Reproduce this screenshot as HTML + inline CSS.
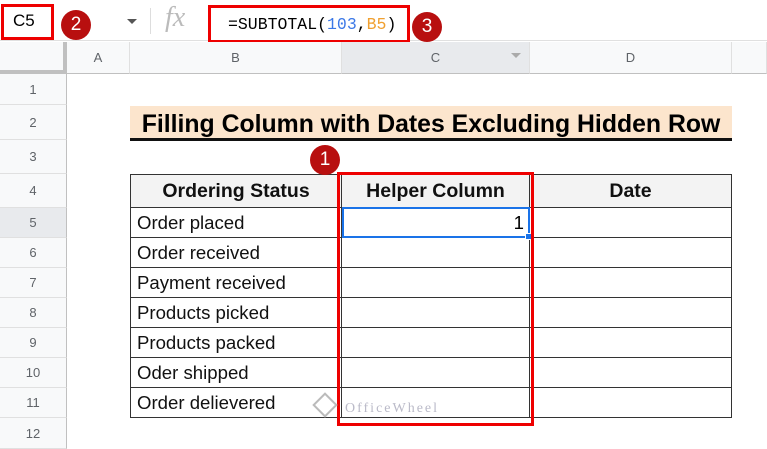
<!DOCTYPE html><html><head><style>
body{margin:0;width:767px;height:449px;overflow:hidden;background:#fff;font-family:"Liberation Sans",Arial,sans-serif;position:relative}
.a{position:absolute;box-sizing:border-box}
.rh{left:0;width:67px;background:#f8f9fa;border-bottom:1px solid #e0e0e0;border-right:1px solid #c0c0c0;color:#5f6368;font-size:13px;text-align:center}
.ch{top:42px;height:32px;background:#f8f9fa;border-right:1px solid #e0e0e0;border-bottom:1px solid #c0c0c0;color:#5f6368;font-size:13px;text-align:center;line-height:32px}
.c{border-right:1px solid #333;border-bottom:1px solid #333;font-size:18.6px;padding-left:6px;color:#111}
.circ{width:30px;height:30px;border-radius:50%;background:#b80f0f;color:#fff;font-size:19px;text-align:center;line-height:30px}
</style></head><body>
<div class="a" style="left:0;top:0;width:767px;height:41px;border-bottom:1px solid #e0e0e0"></div>
<div class="a" style="left:1px;top:4px;width:53px;height:36px;border:3px solid #e00;font-size:17px;padding:4px 0 0 9px">C5</div>
<div class="a circ" style="left:61px;top:10px">2</div>
<div class="a" style="left:127px;top:19px;border:5px solid transparent;border-top:5px solid #555"></div>
<div class="a" style="left:150px;top:8px;width:1px;height:26px;background:#ddd"></div>
<div class="a" style="left:165px;top:2px;font-family:'Liberation Serif',serif;font-style:italic;font-size:28px;color:#bbb">fx</div>
<div class="a" style="left:208px;top:5px;width:202px;height:38px;border:3px solid #e00;font-family:'Liberation Mono',monospace;font-size:16.5px;padding:7px 0 0 17px">=SUBTOTAL(<span style="color:#3b78e7">103</span>,<span style="color:#f0a030">B5</span>)</div>
<div class="a circ" style="left:412px;top:12px">3</div>
<div class="a" style="left:0;top:42px;width:67px;height:32px;background:#f8f9fa;border-right:4px solid #c0c0c0;border-bottom:4px solid #c0c0c0"></div>
<div class="a ch" style="left:67px;width:63px">A</div>
<div class="a ch" style="left:130px;width:212px">B</div>
<div class="a ch" style="left:342px;width:188px;background:#e8eaed">C<span style="position:absolute;right:8px;top:11px;border:5px solid transparent;border-top:5px solid #aaa"></span></div>
<div class="a ch" style="left:530px;width:202px">D</div>
<div class="a ch" style="left:732px;width:35px"></div>
<div class="a rh" style="top:74px;height:31px;line-height:31px">1</div>
<div class="a rh" style="top:105px;height:35px;line-height:35px">2</div>
<div class="a rh" style="top:140px;height:34px;line-height:34px">3</div>
<div class="a rh" style="top:174px;height:34px;line-height:34px">4</div>
<div class="a rh" style="top:208px;height:30px;line-height:30px;background:#e8eaed">5</div>
<div class="a rh" style="top:238px;height:30px;line-height:30px">6</div>
<div class="a rh" style="top:268px;height:30px;line-height:30px">7</div>
<div class="a rh" style="top:298px;height:30px;line-height:30px">8</div>
<div class="a rh" style="top:328px;height:30px;line-height:30px">9</div>
<div class="a rh" style="top:358px;height:30px;line-height:30px">10</div>
<div class="a rh" style="top:388px;height:30px;line-height:30px">11</div>
<div class="a rh" style="top:418px;height:31px;line-height:31px">12</div>
<div class="a" style="left:130px;top:106px;width:602px;height:35px;background:#fce5cd;font-weight:bold;font-size:24.8px;text-align:center;line-height:37px;border-bottom:3px solid #111;white-space:nowrap">Filling Column with Dates Excluding Hidden Row</div>
<div class="a" style="left:130px;top:174px;width:602px;height:244px;border-left:1px solid #333;border-top:1px solid #333"></div>
<div class="a c" style="left:131px;top:175px;width:211px;height:33px;background:#f3f3f3;font-weight:bold;text-align:center;line-height:32px;padding:0;font-size:19.5px">Ordering Status</div>
<div class="a c" style="left:342px;top:175px;width:188px;height:33px;background:#f3f3f3;font-weight:bold;text-align:center;line-height:32px;padding:0;font-size:19.5px">Helper Column</div>
<div class="a c" style="left:530px;top:175px;width:202px;height:33px;background:#f3f3f3;font-weight:bold;text-align:center;line-height:32px;padding:0;font-size:19.5px">Date</div>
<div class="a c" style="left:131px;top:208px;width:211px;height:30px;line-height:30px">Order placed</div>
<div class="a c" style="left:131px;top:238px;width:211px;height:30px;line-height:30px">Order received</div>
<div class="a c" style="left:131px;top:268px;width:211px;height:30px;line-height:30px">Payment received</div>
<div class="a c" style="left:131px;top:298px;width:211px;height:30px;line-height:30px">Products picked</div>
<div class="a c" style="left:131px;top:328px;width:211px;height:30px;line-height:30px">Products packed</div>
<div class="a c" style="left:131px;top:358px;width:211px;height:30px;line-height:30px">Oder shipped</div>
<div class="a c" style="left:131px;top:388px;width:211px;height:30px;line-height:30px">Order delievered</div>
<div class="a c" style="left:342px;top:208px;width:188px;height:30px"></div>
<div class="a c" style="left:342px;top:238px;width:188px;height:30px"></div>
<div class="a c" style="left:342px;top:268px;width:188px;height:30px"></div>
<div class="a c" style="left:342px;top:298px;width:188px;height:30px"></div>
<div class="a c" style="left:342px;top:328px;width:188px;height:30px"></div>
<div class="a c" style="left:342px;top:358px;width:188px;height:30px"></div>
<div class="a c" style="left:342px;top:388px;width:188px;height:30px"></div>
<div class="a c" style="left:530px;top:208px;width:202px;height:30px"></div>
<div class="a c" style="left:530px;top:238px;width:202px;height:30px"></div>
<div class="a c" style="left:530px;top:268px;width:202px;height:30px"></div>
<div class="a c" style="left:530px;top:298px;width:202px;height:30px"></div>
<div class="a c" style="left:530px;top:328px;width:202px;height:30px"></div>
<div class="a c" style="left:530px;top:358px;width:202px;height:30px"></div>
<div class="a c" style="left:530px;top:388px;width:202px;height:30px"></div>
<div class="a" style="left:342px;top:207px;width:188px;height:31px;border:2px solid #1a73e8;font-size:18.6px;text-align:right;padding-right:4px;line-height:27px">1</div>
<div class="a" style="left:525px;top:233px;width:7px;height:7px;background:#1a73e8;border:1px solid #fff"></div>
<div class="a" style="left:337px;top:172px;width:197px;height:254px;border:3px solid #e00"></div>
<div class="a circ" style="left:310px;top:145px">1</div>
<div class="a" style="left:345px;top:401px;color:#aab;font-family:'Liberation Serif',serif;font-size:14px;letter-spacing:2px;opacity:.8">OfficeWheel</div>
<div class="a" style="left:316px;top:396px;width:18px;height:18px;border:2px solid #bbb;transform:rotate(45deg)"></div>
</body></html>
